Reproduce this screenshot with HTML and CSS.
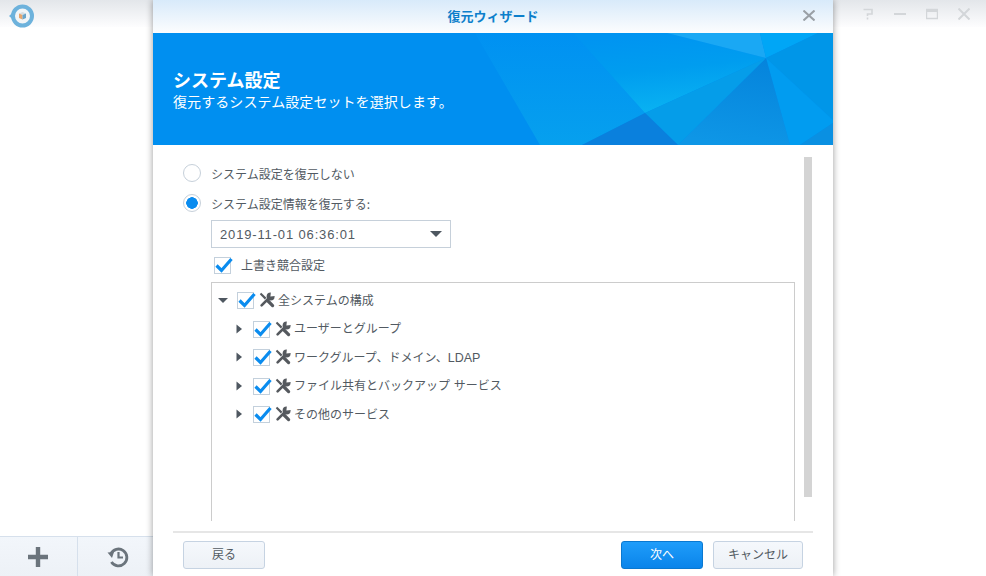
FILE: index.html
```html
<!DOCTYPE html>
<html lang="ja">
<head>
    <meta charset="UTF-8">
    <meta name="viewport" content="width=device-width, initial-scale=1.0">
    <title>復元ウィザード</title>
    <link rel="stylesheet" href="styles.css">
</head>
<body>
    <svg class="defs" width="0" height="0">
        <symbol id="check" viewBox="0 0 20 20">
            <rect x="1.5" y="2.5" width="16" height="16" fill="#fff" stroke="#c3d0dc"/>
            <path d="M3.5 10.5 L8.5 15.5 L18.5 4" fill="none" stroke="#0a8cef" stroke-width="3.2"/>
        </symbol>
        <symbol id="tools" viewBox="0 0 16 16">
            <path d="M0.8 2.2 L2.2 0.8 L7.4 5.8 L5.8 7.4 Z" fill="#55595e"/>
            <path d="M8.5 8.5 L13.6 13.6" stroke="#55595e" stroke-width="3.2" stroke-linecap="round"/>
            <path d="M2.6 13.4 L9.5 6.5" stroke="#55595e" stroke-width="2.6" stroke-linecap="round"/>
            <circle cx="11.6" cy="4.4" r="4" fill="#55595e"/>
            <path d="M11.4 4.6 L12 -1 L17 -1 L17 4 Z" fill="#fff"/>
        </symbol>
        <symbol id="arrow-right" viewBox="0 0 10 10">
            <path d="M2.5 0.5 L8 5 L2.5 9.5 Z" fill="#4e5760"/>
        </symbol>
        <symbol id="arrow-down" viewBox="0 0 10 10">
            <path d="M0 3 L10 3 L5 8 Z" fill="#4e5760"/>
        </symbol>
    </svg>

    <div class="app">
        <div class="app-header">
            <svg class="app-logo" width="26" height="26" viewBox="0 0 26 26">
                <circle cx="14.5" cy="13" r="9.5" fill="#f2f5f7" stroke="#6db2dc" stroke-width="4"/>
                <path d="M1 13 L6 8.5 L6 17.5 Z" fill="#6db2dc"/>
                <path d="M11 10.5 L14.5 9 L18 10.5 L14.5 12 Z" fill="#d5dde2"/>
                <path d="M11 10.5 L14.5 12 L14.5 16.5 L11 15 Z" fill="#e9a66c"/>
                <path d="M18 10.5 L14.5 12 L14.5 16.5 L18 15 Z" fill="#6ba5c9"/>
            </svg>
            <div class="win-icons">
                <svg width="12" height="12" viewBox="0 0 12 12"><path d="M1.5 1.5 H10 V6 H5.5 V8 M5.5 9.5 V11.5" fill="none" stroke="#d3d6d9" stroke-width="1.6"/></svg>
                <svg width="12" height="12" viewBox="0 0 12 12"><path d="M0 6 H12" stroke="#d3d6d9" stroke-width="2"/></svg>
                <svg width="12" height="12" viewBox="0 0 12 12"><path d="M0.5 1.5 H11.5 V10.5 H0.5 Z" fill="none" stroke="#d3d6d9" stroke-width="1.4"/><path d="M0 3 H12" stroke="#d3d6d9" stroke-width="2"/></svg>
                <svg width="12" height="12" viewBox="0 0 12 12"><path d="M0.5 0.5 L11.5 11.5 M11.5 0.5 L0.5 11.5" stroke="#d3d6d9" stroke-width="2"/></svg>
            </div>
        </div>
        <div class="app-main"></div>
        <div class="app-toolbar">
            <div class="tool-btn tool-add">
                <svg width="22" height="22" viewBox="0 0 22 22"><path d="M11 1 V21 M1 11 H21" stroke="#6b747c" stroke-width="4.4"/></svg>
            </div>
            <div class="tool-btn tool-history">
                <svg width="22" height="22" viewBox="0 0 22 22">
                    <path d="M3.8 8 A8.4 8.4 0 1 1 4.4 16" fill="none" stroke="#6b747c" stroke-width="2.8"/>
                    <path d="M0.5 6.5 L7 6 L5 12 Z" fill="#6b747c"/>
                    <path d="M11.5 6 V11.5 H16" fill="none" stroke="#6b747c" stroke-width="2.2"/>
                </svg>
            </div>
        </div>
    </div>

    <div class="dialog">
        <div class="dialog-title">
            <span>復元ウィザード</span>
            <svg class="dialog-close" width="12" height="11" viewBox="0 0 12 11"><path d="M0.5 0.5 L11.5 10.5 M11.5 0.5 L0.5 10.5" stroke="#9aa0a6" stroke-width="2"/></svg>
        </div>

        <div class="banner">
            <svg class="banner-bg" width="680" height="112" viewBox="0 0 680 112">
                <defs>
                    <linearGradient id="glow" x1="0.35" y1="0" x2="0.6" y2="1">
                        <stop offset="0" stop-color="#0094f1"/>
                        <stop offset="0.45" stop-color="#009def"/>
                        <stop offset="1" stop-color="#0ab4f2"/>
                    </linearGradient>
                    <linearGradient id="side" x1="0" y1="0" x2="0" y2="1">
                        <stop offset="0" stop-color="#0091f2"/>
                        <stop offset="1" stop-color="#06a0ee"/>
                    </linearGradient>
                    <linearGradient id="core" x1="0.7" y1="0" x2="0.5" y2="1">
                        <stop offset="0" stop-color="#0584dc"/>
                        <stop offset="1" stop-color="#0e96e6"/>
                    </linearGradient>
                </defs>
                <polygon points="322,0 387,112 429,112 492,80 420,0" fill="url(#side)"/>
                <polygon points="420,0 514,0 613,25 492,80" fill="url(#glow)"/>
                <polygon points="514,0 607,0 613,25" fill="#1aa8f4"/>
                <polygon points="607,0 665,0 613,25" fill="#00a6f6"/>
                <polygon points="665,0 680,0 680,87 613,25" fill="#0096e8"/>
                <polygon points="613,25 680,87 680,90 647,112 637,112" fill="#019cf0"/>
                <polygon points="680,90 680,112 647,112" fill="#0a90e2"/>
                <polygon points="613,25 637,112 525,112" fill="url(#core)"/>
                <polygon points="613,25 525,112 492,80" fill="#059de9"/>
                <polygon points="492,80 525,112 429,112" fill="#0a80dd"/>
            </svg>
            <h1>システム設定</h1>
            <p>復元するシステム設定セットを選択します。</p>
        </div>

        <div class="dialog-body">
            <div class="form">
                <div class="radio-row">
                    <span class="radio"></span>
                    <span>システム設定を復元しない</span>
                </div>
                <div class="radio-row">
                    <span class="radio radio-on"></span>
                    <span>システム設定情報を復元する:</span>
                </div>
                <div class="select">
                    <span>2019-11-01 06:36:01</span>
                    <svg width="12" height="6" viewBox="0 0 12 6"><path d="M0 0 H12 L6 6 Z" fill="#4e5760"/></svg>
                </div>
                <div class="check-row">
                    <svg width="20" height="20"><use href="#check"/></svg>
                    <span class="check-label">上書き競合設定</span>
                </div>
                <div class="tree">
                    <div class="tree-row tree-root">
                        <svg class="tree-arrow" width="10" height="10"><use href="#arrow-down"/></svg>
                        <svg width="20" height="20"><use href="#check"/></svg>
                        <svg class="tree-icon" width="16" height="16"><use href="#tools"/></svg>
                        <span class="tree-label">全システムの構成</span>
                    </div>
                    <div class="tree-row">
                        <svg class="tree-arrow" width="10" height="10"><use href="#arrow-right"/></svg>
                        <svg width="20" height="20"><use href="#check"/></svg>
                        <svg class="tree-icon" width="16" height="16"><use href="#tools"/></svg>
                        <span class="tree-label">ユーザーとグループ</span>
                    </div>
                    <div class="tree-row">
                        <svg class="tree-arrow" width="10" height="10"><use href="#arrow-right"/></svg>
                        <svg width="20" height="20"><use href="#check"/></svg>
                        <svg class="tree-icon" width="16" height="16"><use href="#tools"/></svg>
                        <span class="tree-label">ワークグループ、ドメイン、<span class="latin">LDAP</span></span>
                    </div>
                    <div class="tree-row">
                        <svg class="tree-arrow" width="10" height="10"><use href="#arrow-right"/></svg>
                        <svg width="20" height="20"><use href="#check"/></svg>
                        <svg class="tree-icon" width="16" height="16"><use href="#tools"/></svg>
                        <span class="tree-label">ファイル共有とバックアップ サービス</span>
                    </div>
                    <div class="tree-row">
                        <svg class="tree-arrow" width="10" height="10"><use href="#arrow-right"/></svg>
                        <svg width="20" height="20"><use href="#check"/></svg>
                        <svg class="tree-icon" width="16" height="16"><use href="#tools"/></svg>
                        <span class="tree-label">その他のサービス</span>
                    </div>
                </div>
            </div>
            <div class="scrollbar"></div>
        </div>

        <div class="dialog-footer">
            <button type="button" class="btn btn-back">戻る</button>
            <div class="footer-right">
                <button type="button" class="btn btn-next">次へ</button>
                <button type="button" class="btn btn-cancel">キャンセル</button>
            </div>
        </div>
    </div>
</body>
</html>
```

FILE: styles.css
```css
body, html {
    margin: 0;
    height: 100%;
    overflow: hidden;
    background-color: #fff;
    font-family: "Noto Sans CJK JP", "Noto Sans", sans-serif;
    font-size: 12px;
    color: #525a62;
}

.defs {
    position: absolute;
}

svg {
    display: block;
    flex-shrink: 0;
}

/* Окно за диалогом */
.app {
    height: 576px;
    display: flex;
    flex-direction: column;
}

.app-header {
    height: 27px;
    padding: 4px 16px 0 8px;
    display: flex;
    justify-content: space-between;
    align-items: center;
    box-sizing: border-box;
    background: linear-gradient(#e3e6ea, #fdfdfe);
}

.win-icons {
    display: flex;
    gap: 20px;
    margin-top: -4px;
}

.app-main {
    flex: 1;
}

.app-toolbar {
    width: 153px;
    height: 40px;
    display: flex;
    box-sizing: border-box;
    border-top: 1px solid #d6e0ec;
    background: linear-gradient(#f2f6fb, #edf1f6);
}

.tool-btn {
    display: flex;
    align-items: center;
    justify-content: center;
}

.tool-add {
    width: 78px;
    padding-right: 1px;
    box-sizing: border-box;
    border-right: 1px solid #d6e0ec;
}

.tool-history {
    flex: 1;
    padding-left: 5px;
}

/* Диалог */
.dialog {
    position: absolute;
    left: 153px;
    top: 0;
    width: 680px;
    height: 576px;
    display: flex;
    flex-direction: column;
    background-color: #fff;
    box-shadow: 0 0 7px rgba(0, 0, 0, 0.4);
}

.dialog-title {
    height: 33px;
    flex-shrink: 0;
    padding-bottom: 3px;
    box-sizing: border-box;
    display: flex;
    align-items: center;
    justify-content: center;
    position: relative;
    background: linear-gradient(#d8eafa, #fcfdfe);
    color: #0d7fcb;
    font-size: 13px;
    font-weight: bold;
}

.dialog-close {
    position: absolute;
    right: 18px;
    top: 10px;
}

.banner {
    height: 112px;
    flex-shrink: 0;
    position: relative;
    box-sizing: border-box;
    padding: 34px 20px 0;
    background-color: #008ff0;
    color: #fff;
    overflow: hidden;
}

.banner-bg {
    position: absolute;
    left: 0;
    top: 0;
}

.banner h1 {
    position: relative;
    margin: 0;
    font-size: 18px;
    line-height: 24px;
    font-weight: bold;
}

.banner p {
    position: relative;
    margin: 0;
    font-size: 14px;
    line-height: 20px;
    letter-spacing: 0.08px;
}

.dialog-body {
    flex: 1;
    display: flex;
    min-height: 0;
}

.form {
    width: 642px;
    box-sizing: border-box;
    padding: 19px 0 0 30px;
}

.radio-row {
    display: flex;
    align-items: center;
    gap: 10px;
    height: 18px;
    margin-bottom: 12px;
}

.radio {
    width: 18px;
    height: 18px;
    box-sizing: border-box;
    border: 1px solid #c6d0da;
    border-radius: 50%;
    background-color: #fff;
}

.radio-on {
    background: radial-gradient(circle, #0a8cef 0, #0a8cef 5.5px, #fff 6px);
}

.select {
    width: 240px;
    height: 28px;
    margin: -4px 0 0 28px;
    padding: 0 8px 0 8px;
    box-sizing: border-box;
    display: flex;
    align-items: center;
    justify-content: space-between;
    border: 1px solid #c6d0da;
    font-family: "Liberation Sans", sans-serif;
    font-size: 13px;
    letter-spacing: 0.85px;
}

.check-row {
    display: flex;
    align-items: center;
    gap: 8px;
    height: 20px;
    margin: 7px 0 7px 30px;
}

.check-label {
    margin-top: -2px;
}

.tree {
    width: 584px;
    height: 239px;
    margin-left: 28px;
    padding-top: 3px;
    box-sizing: border-box;
    border: 1px solid #ccc;
    border-bottom: none;
}

.tree-row {
    height: 28.5px;
    display: flex;
    align-items: center;
    padding-left: 22px;
}

.tree-root {
    padding-left: 6px;
}

.tree-arrow {
    margin-right: 8px;
}

.tree-icon {
    margin: 0 3px 0 3px;
}

.tree-label {
    margin-top: -2px;
    word-spacing: 1px;
}

.latin {
    font-family: "Liberation Sans", sans-serif;
    font-size: 12.5px;
}

.scrollbar {
    width: 8px;
    height: 340px;
    margin: 12px 0 0 9px;
    background-color: #d4d4d4;
}

.dialog-footer {
    height: 45px;
    flex-shrink: 0;
    margin: 0 20px;
    padding: 8px 10px 0;
    box-sizing: border-box;
    display: flex;
    justify-content: space-between;
    border-top: 2px solid #e6e6e6;
}

.footer-right {
    display: flex;
    gap: 10px;
}

.btn {
    height: 28px;
    width: 82px;
    padding: 0 0 3px;
    border: 1px solid #c6d3e2;
    border-radius: 3px;
    background: linear-gradient(#f5f8fc, #edf1f6);
    color: #525a62;
    font-family: inherit;
    font-size: 12px;
    cursor: pointer;
}

.btn-next {
    border-color: #0a78d0;
    background: linear-gradient(#1f9dfa, #0a84ea);
    color: #fff;
}

.btn-cancel {
    width: 90px;
}
```
